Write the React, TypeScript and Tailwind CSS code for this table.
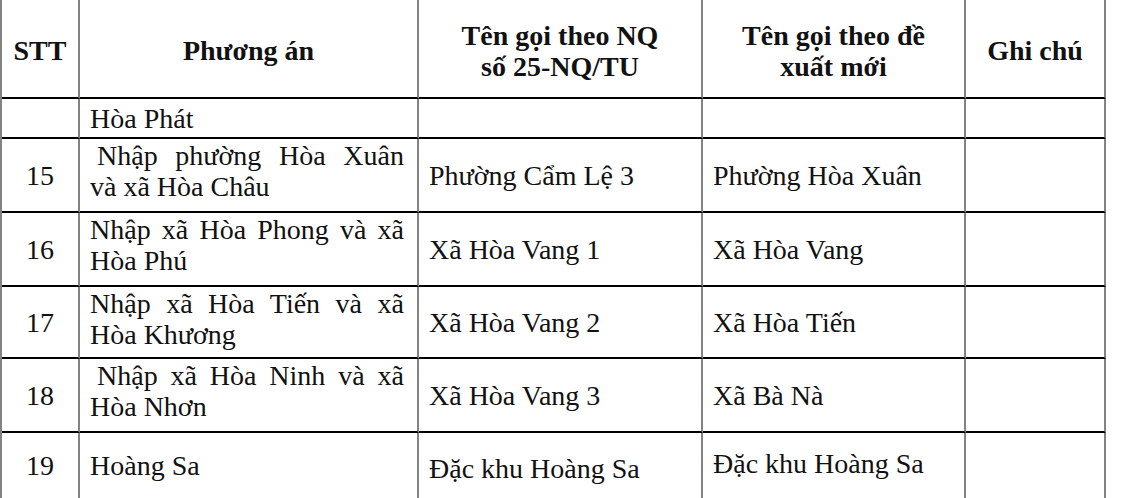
import React from "react";

type Row = {
  stt: string;
  plan: string[];
  indent?: boolean;
  nq: string;
  nw: string;
  last?: boolean;
};

const rows: Row[] = [
  { stt: "", plan: ["Hòa Phát"], nq: "", nw: "" },
  {
    stt: "15",
    plan: ["Nhập phường Hòa Xuân", "và xã Hòa Châu"],
    indent: true,
    nq: "Phường Cẩm Lệ 3",
    nw: "Phường Hòa Xuân",
  },
  {
    stt: "16",
    plan: ["Nhập xã Hòa Phong và xã", "Hòa Phú"],
    nq: "Xã Hòa Vang 1",
    nw: "Xã Hòa Vang",
  },
  {
    stt: "17",
    plan: ["Nhập xã Hòa Tiến và xã", "Hòa Khương"],
    nq: "Xã Hòa Vang 2",
    nw: "Xã Hòa Tiến",
  },
  {
    stt: "18",
    plan: ["Nhập xã Hòa Ninh và xã", "Hòa Nhơn"],
    indent: true,
    nq: "Xã Hòa Vang 3",
    nw: "Xã Bà Nà",
  },
  {
    stt: "19",
    plan: ["Hoàng Sa"],
    nq: "Đặc khu Hoàng Sa",
    nw: "Đặc khu Hoàng Sa",
    last: true,
  },
];

// grid lines: verticals gray, horizontals black
const line = "border-r-2 border-r-[#838383]";
const hline = "border-b-2 border-b-black";

function Head({ children }: { children: React.ReactNode }) {
  return (
    <div className={`${line} ${hline} flex items-center justify-center pt-[4px] text-center font-bold`}>
      <div>{children}</div>
    </div>
  );
}

function PlanCell({ row }: { row: Row }) {
  const border = row.last ? "" : hline;
  if (row.plan.length === 1) {
    return (
      <div className={`${line} ${border} flex items-center pl-[10px] pr-[13px]`}>
        {row.plan[0]}
      </div>
    );
  }
  return (
    <div className={`${line} ${border} pl-[10px] pr-[13px] pt-[1px]`}>
      {/* first line is justified out to the full width, as in the Word table */}
      <div className={`text-justify [text-align-last:justify] ${row.indent ? "pl-[7px]" : ""}`}>
        {row.plan[0]}
      </div>
      <div>{row.plan[1]}</div>
    </div>
  );
}

export default function App() {
  return (
    <div className="h-[498px] w-[1134px] overflow-hidden bg-white font-[family-name:'Liberation_Serif',serif] text-[28px] leading-[31px] text-[#111]">
      <div className="grid w-fit grid-cols-[78px_339px_284px_263px_140px] grid-rows-[99px_40px_74px_74px_72px_74px_65px] border-l-2 border-l-[#838383]">
        <Head>STT</Head>
        <Head>Phương án</Head>
        <Head>
          Tên gọi theo NQ
          <br />
          số 25-NQ/TU
        </Head>
        <Head>
          Tên gọi theo đề
          <br />
          xuất mới
        </Head>
        <Head>Ghi chú</Head>

        {rows.map((r, i) => (
          <React.Fragment key={i}>
            <div className={`${line} ${r.last ? "" : hline} flex items-center justify-center`}>
              {r.stt}
            </div>
            <PlanCell row={r} />
            <div className={`${line} ${r.last ? "pt-[6px]" : hline} flex items-center pl-[10px]`}>
              {r.nq}
            </div>
            <div className={`${line} ${r.last ? "pb-[4px]" : hline} flex items-center pl-[10px]`}>
              {r.nw}
            </div>
            <div className={`${line} ${r.last ? "" : hline}`} />
          </React.Fragment>
        ))}
      </div>
    </div>
  );
}
